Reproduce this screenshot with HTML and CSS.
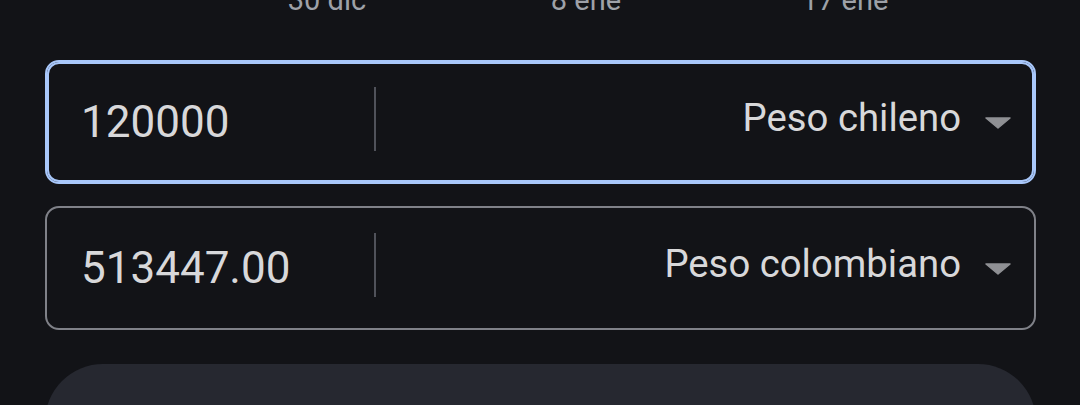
FILE: index.html
```html
<!DOCTYPE html>
<html lang="es">
<head>
    <meta charset="UTF-8">
    <meta name="viewport" content="width=device-width, initial-scale=1.0">
    <title>Conversor de divisas</title>
    <link rel="stylesheet" href="styles.css">
</head>
<body>
    <div class="page">
        <div class="axis">
            <span>30 dic</span>
            <span>8 ene</span>
            <span>17 ene</span>
        </div>

        <div class="field focus">
            <div class="amount">120000</div>
            <div class="divider"></div>
            <div class="currency">
                <span>Peso chileno</span>
                <svg class="arrow" width="26" height="12" viewBox="0 0 26 12">
                    <polygon points="1,1 25,1 13,11" fill="#8f9094" stroke="#8f9094" stroke-width="1.5" stroke-linejoin="round"/>
                </svg>
            </div>
        </div>

        <div class="field">
            <div class="amount">513447.00</div>
            <div class="divider"></div>
            <div class="currency">
                <span>Peso colombiano</span>
                <svg class="arrow" width="26" height="12" viewBox="0 0 26 12">
                    <polygon points="1,1 25,1 13,11" fill="#8f9094" stroke="#8f9094" stroke-width="1.5" stroke-linejoin="round"/>
                </svg>
            </div>
        </div>

        <div class="card"></div>
    </div>
</body>
</html>
```

FILE: styles.css
```css
body {
    margin: 0;
    background-color: #121317;
    font-family: Roboto, "Noto Sans", sans-serif;
    color: #d8d8da;
    overflow: hidden;
}
.page {
    padding: 0 44px 0 45px;
}
.axis {
    display: grid;
    grid-template-columns: 160px 160px 160px;
    column-gap: 99px;
    margin: -14px 0 0 202px;
    font-size: 29px;
    line-height: 29px;
    color: #9ea1a8;
    text-align: center;
}
.field {
    display: flex;
    align-items: center;
    height: 124px;
    box-sizing: border-box;
    border: 2px solid #7f8188;
    border-radius: 14px;
    margin-top: 22px;
}
.field.focus {
    margin-top: 45px;
    border-color: #a8c7fa;
    box-shadow: inset 0 0 0 2px #a8c7fa;
}
.amount {
    flex: 0 0 293px;
    padding-left: 34px;
    font-size: 44px;
}
.divider {
    width: 2px;
    height: 64px;
    margin-top: -6px;
    background-color: #50525a;
}
.currency {
    flex: 1;
    display: flex;
    align-items: center;
    justify-content: flex-end;
    gap: 24px;
    padding: 0 23px 10px 0;
    font-size: 38.3px;
}
.arrow {
    margin-top: 12px;
}
.card {
    margin-top: 34px;
    height: 120px;
    border-radius: 58px;
    background-color: #262830;
}
```
